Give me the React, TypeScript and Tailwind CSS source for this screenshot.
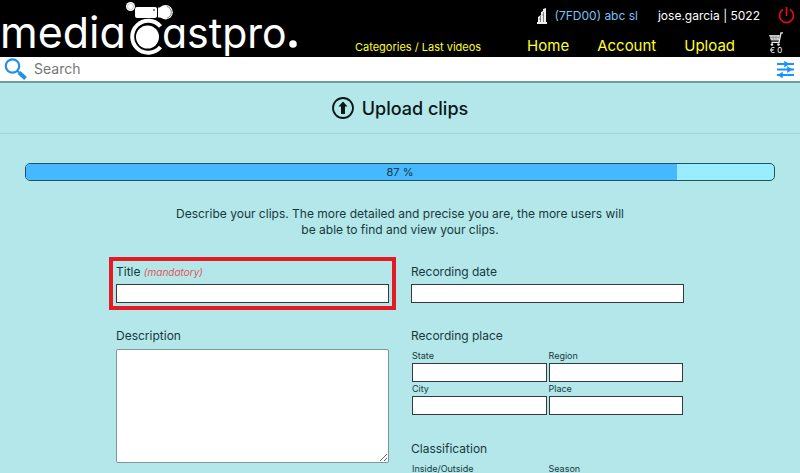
import type { InputHTMLAttributes } from "react";

function Logo() {
  return (
    <svg viewBox="0 0 300 57" className="h-[57px] w-[300px] shrink-0" role="img" aria-label="mediacastpro.">
      <g fill="#fff" className="font-[Inter,sans-serif] [font-feature-settings:'cv11','ss03']">
        <text x="0" y="48" fontSize="43">media</text>
        <text x="162" y="48" fontSize="41">astpro</text>
      </g>
      <circle cx="293" cy="44" r="3.800" fill="#fff" />
      <path d="M160.500 26.500A16 16 0 1 0 160.500 47" fill="none" stroke="#fff" strokeWidth="4" />
      <circle cx="147.500" cy="37" r="11.500" fill="#fff" />
      <circle cx="130.500" cy="6.500" r="4.500" fill="#fff" />
      <circle cx="130.500" cy="6.500" r="3" fill="none" stroke="#bbb" strokeWidth=".8" />
      <rect x="135" y="7" width="22" height="11" rx="2" fill="#fff" />
      <circle cx="154" cy="10" r="1" fill="#a33" />
      <path d="M158 7.500h4v10h-4z" fill="#fff" />
      <circle cx="165.500" cy="12.200" r="7.300" fill="#fff" />
      <path d="M167 6.500a6 6 0 0 1 0 11.500" fill="none" stroke="#666" strokeWidth=".8" />
    </svg>
  );
}

function Building() {
  return (
    <svg viewBox="0 0 10 16" className="h-4 w-[10px]" aria-hidden="true">
      <path d="M0 14h1V9l3-2V4l2-1V1l3-1v14h1v2H0z" fill="#eee" />
      <path d="M3.500 8v6M6.500 4v10M2 11h2M5 7h1" stroke="#555" strokeWidth=".7" />
    </svg>
  );
}

function Cart() {
  return (
    <svg viewBox="0 0 14 14" className="h-[14px] w-[14px]" aria-hidden="true">
      <path d="M0 3h10.800L9.800 8.500H2z" fill="#ccc" />
      <path d="M14 .8h-2L10 10.300H2.500" fill="none" stroke="#eee" strokeWidth="1.300" />
      <path d="M1 5.500h9M4 3.500l.5 5M7 3.500v5" stroke="#777" strokeWidth=".5" />
      <circle cx="3" cy="12.500" r="1.300" fill="#eee" />
      <circle cx="9.500" cy="12.500" r="1.300" fill="#eee" />
    </svg>
  );
}

function Header() {
  return (
    <header className="flex h-[57px] justify-between bg-black">
      <a href="#home"><Logo /></a>
      <div className="flex pr-[5px]">
        <div className="flex flex-col justify-between pt-2">
          <div className="flex h-4 items-center justify-end text-[12px] leading-4">
            <a href="#company" className="flex items-center gap-2 text-[#7cc0f5]">
              <Building />
              (7FD00) abc sl
            </a>
            <span className="ml-5 text-white">jose.garcia | 5022</span>
          </div>
          <nav className="flex items-baseline justify-end pr-[25px] text-[15px] leading-5 text-[#ffff22]">
            <a href="#categories" className="mr-[46px] text-[11px]">Categories / Last videos</a>
            <a href="#home" className="mr-7">Home</a>
            <a href="#account" className="mr-7">Account</a>
            <a href="#upload">Upload</a>
          </nav>
        </div>
        <div className="flex w-[35px] flex-col items-end justify-between pt-[7px] pb-[3px]">
          <button type="button" aria-label="Log out">
            <svg viewBox="0 0 17 17" className="block h-[17px] w-[17px]" fill="none" stroke="#e00c18" strokeWidth="1.700">
              <path d="M5 2.500a7 7 0 1 0 7 0M8.500 0v9" />
            </svg>
          </button>
          <a href="#cart" className="mr-3 flex flex-col items-center text-[8px] leading-[8px] text-white">
            <Cart />
            € 0
          </a>
        </div>
      </div>
    </header>
  );
}

function SearchBar() {
  return (
    <form className="flex h-[26px] items-center border-b-2 border-[#6c9ea5] bg-white pr-[6px] pl-[4px]">
      <svg viewBox="0 0 24 22" className="h-[22px] w-6 shrink-0" fill="none" stroke="#2090ea" aria-hidden="true">
        <circle cx="8.500" cy="8" r="6.700" strokeWidth="2.200" />
        <path d="M13 12.500l2 2" strokeWidth="2" />
        <path d="M15 14.500l6.500 6" strokeWidth="4" />
      </svg>
      <input aria-label="Search" placeholder="Search" className="ml-[6px] min-w-0 flex-1 text-[14px] leading-5 outline-none placeholder:text-[#757575]" />
      <button type="button" aria-label="Filters">
        <svg viewBox="0 0 17 17" className="block h-[17px] w-[17px]" stroke="#1593ff" strokeWidth="2" fill="#1593ff">
          <path d="M0 3h17M0 8.500h17M0 14h17" />
          <path d="M8 1l3 2-3 2zM11 6.500l3 2-3 2zM5 12L2 14l3 2z" strokeWidth="1.500" />
        </svg>
      </button>
    </form>
  );
}

function TextInput(props: InputHTMLAttributes<HTMLInputElement>) {
  return <input {...props} className="block h-[19px] w-full border border-[#333b3d] bg-white px-1 text-[12px] outline-none" />;
}

function SmallField({ id, label }: { id: string; label: string }) {
  return (
    <div>
      <label htmlFor={id} className="block text-[9px] leading-[14px]">{label}</label>
      <TextInput id={id} />
    </div>
  );
}

export default function App() {
  const progress = 87;
  return (
    <div className="h-screen overflow-hidden bg-[#b4e7e9] font-[Inter,'Noto_Sans',sans-serif] text-[12px] text-[#16393d]">
      <Header />
      <SearchBar />
      <main>
        <h1 className="flex h-[51px] items-center justify-center gap-2 border-b border-[#a3d3d6] text-[18px] font-medium text-[#0a1718]">
          <svg viewBox="0 0 22 22" className="h-[22px] w-[22px]" aria-hidden="true">
            <circle cx="11" cy="11" r="10" fill="none" stroke="currentColor" strokeWidth="1.800" />
            <path d="M11 4.500l4.500 5h-2.500v7.500H9V9.500H6.500z" fill="currentColor" />
          </svg>
          Upload clips
        </h1>

        <div
          role="progressbar"
          aria-label="Upload progress"
          aria-valuenow={progress}
          className="relative mx-[25px] mt-[29px] h-[18px] overflow-hidden rounded-[5px] border border-[#1d555f] bg-[#99edff]"
        >
          <div className="h-full bg-[#45b8ff]" style={{ width: `${progress}%` }} />
          <span className="absolute inset-0 text-center text-[11px] leading-4">{progress} %</span>
        </div>

        <p className="mx-auto mt-[25px] max-w-[460px] text-center leading-4">
          Describe your clips. The more detailed and precise you are, the more users will be able to find and view your clips.
        </p>

        <form className="mx-auto mt-[26px] grid max-w-[568px] grid-cols-2 items-start gap-x-[22px]">
          <div>
            <div className="outline-4 outline-offset-3 outline-[#e51b24]">
              <label htmlFor="title" className="mb-1 block leading-4">
                Title <em className="text-[10px] text-[#e0555a]">(mandatory)</em>
              </label>
              <TextInput id="title" required />
            </div>
            <label htmlFor="description" className="mt-[25px] mb-[5px] block leading-4">Description</label>
            <textarea id="description" className="block h-[114px] w-full resize rounded-[2px] border border-[#7f9699] bg-white p-1 outline-none" />
          </div>

          <div>
            <label htmlFor="date" className="mb-1 block leading-4">Recording date</label>
            <TextInput id="date" />
            <fieldset className="mt-[25px]">
              <legend className="mb-[5px] leading-4">Recording place</legend>
              <div className="grid grid-cols-2 gap-x-[2px] px-px">
                <SmallField id="state" label="State" />
                <SmallField id="region" label="Region" />
                <SmallField id="city" label="City" />
                <SmallField id="place" label="Place" />
              </div>
            </fieldset>
            <fieldset className="mt-[26px]">
              <legend className="mb-[5px] leading-4">Classification</legend>
              <div className="grid grid-cols-2 gap-x-[2px] px-px">
                <SmallField id="inside-outside" label="Inside/Outside" />
                <SmallField id="season" label="Season" />
              </div>
            </fieldset>
          </div>
        </form>
      </main>
    </div>
  );
}
